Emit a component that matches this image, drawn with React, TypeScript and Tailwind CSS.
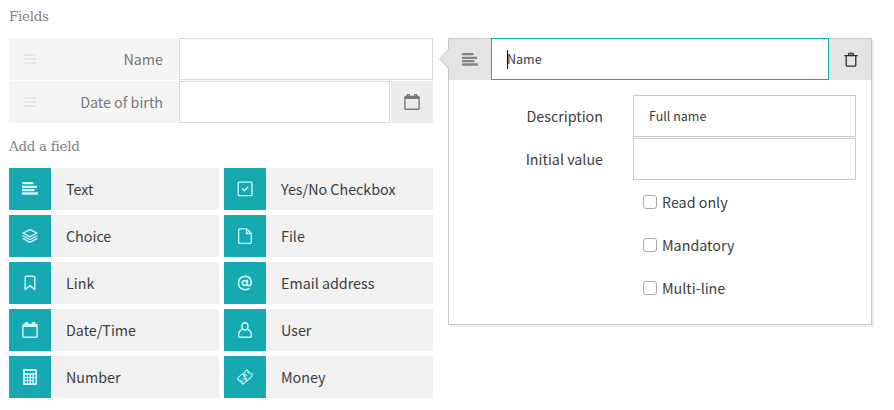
import React from "react";

const SANS = "font-['Noto_Sans_CJK_SC','Noto_Sans',sans-serif]";

type IconProps = { className?: string };

const TextIcon = ({ className }: IconProps) => (
  <svg className={className} width="16" height="16" viewBox="0 0 16 16" fill="currentColor">
    <path d="M0 1h11.5v2.300H0zM0 4.700h15v2.300H0zM0 8h12.5v2.300H0zM0 11.200h16v2.600H0z" />
  </svg>
);

const stroke = { fill: "none", stroke: "currentColor", strokeLinejoin: "round", strokeLinecap: "round" } as const;

const LayersIcon = () => (
  <svg width="16" height="16" viewBox="0 0 16 16" {...stroke} strokeWidth="1.3">
    <path d="M8 1.600l7 3.6-7 3.6-7-3.6z" />
    <path d="M1 8l7 3.6L15 8M1 10.700l7 3.6 7-3.6" />
  </svg>
);

const BookmarkIcon = () => (
  <svg width="16" height="16" viewBox="0 0 16 16" {...stroke} strokeWidth="1.4">
    <path d="M3.2 14.6V2.2q0-1 1-1h7.6q1 0 1 1v12.400L8 10.600z" />
  </svg>
);

const CalendarIcon = ({ className }: IconProps) => (
  <svg className={className} width="16" height="16" viewBox="0 0 16 16" {...stroke} strokeWidth="1.4">
    <rect x="0.9" y="2.4" width="14.2" height="12.9" rx="1" />
    <path d="M1 2.500h14v2.500H1z" fill="currentColor" stroke="none" />
    <rect x="3.3" y="0.500" width="2.200" height="3.8" rx="1.100" />
    <rect x="10.5" y="0.500" width="2.200" height="3.8" rx="1.100" />
  </svg>
);

const CalculatorIcon = () => (
  <svg width="16" height="16" viewBox="0 0 16 16" fill="currentColor">
    <path
      fillRule="evenodd"
      d="M2 0h12q1 0 1 1v14q0 1-1 1H2q-1 0-1-1V1q0-1 1-1zM3 2v2h10V2zM3 6v2h2V6zM6 6v2h1.500V6zM9 6v2h1.500V6zM12 6v2h1.500V6zM3 9v2h2V9zM6 9v2h1.500V9zM9 9v2h1.500V9zM12 9v5h1.500V9zM3 12v2h2v-2zM6 12v2h1.500v-2zM9 12v2h1.500v-2z"
    />
  </svg>
);

const CheckIcon = () => (
  <svg width="16" height="16" viewBox="0 0 16 16" {...stroke} strokeWidth="1.3">
    <rect x="1.200" y="1.200" width="13.800" height="13.500" rx="1" />
    <path d="M5.500 7.800l1.900 1.900 3.400-3.500" />
  </svg>
);

const FileIcon = () => (
  <svg width="16" height="16" viewBox="0 0 16 16" {...stroke} strokeWidth="1.3">
    <path d="M9.500 0.800H2.700q-1 0-1 1v12.500q0 1 1 1h10.600q1 0 1-1V5.500zM9.500 0.800v4.700h4.800" />
  </svg>
);

const AtIcon = () => (
  <svg width="16" height="16" viewBox="0 0 16 16" {...stroke} strokeWidth="1.600">
    <ellipse cx="7.700" cy="8" rx="2.300" ry="2.500" />
    <path d="M10.500 5.300l-.4 4q0 1.500 1.600 1.500 2.600-.3 2.600-3.400Q13.900 1.500 8.200 1.300 1.700 1.700 1.500 8q.2 6.500 6.500 6.600 2.500 0 4-.9" />
  </svg>
);

const UserIcon = () => (
  <svg width="16" height="16" viewBox="0 0 16 16" {...stroke} strokeWidth="1.400">
    <rect x="5" y="0.800" width="6" height="7.200" rx="3" />
    <path d="M5.600 7.200Q1.700 9 1.700 13v1.200q0 1 1 1h10.600q1 0 1-1V13q0-4-3.900-5.800" />
  </svg>
);

const MoneyIcon = () => (
  <svg width="16" height="16" viewBox="0 0 16 16" {...stroke} strokeWidth="1.050">
    <path d="M.6 10.200Q1 8 4.200 5.900 7.600 3.800 9.900 .7q1.400 2.300 5.500 4.700Q15 8 11.700 10.200 8.300 12.400 6 15.300 4.700 12.700 .6 10.200z" />
    <path d="M9.500 6.600Q8.200 4.900 6.900 5.900q-.8 1.100.7 1.900 2 .7 1.300 2-1.300 1-2.600-.5M6.500 4.900l3 6" />
    <path d="M10.600 3.300l1.500 1.300M3.800 11.300l1.500 1.300" />
  </svg>
);

const TrashIcon = () => (
  <svg width="14" height="15" viewBox="0 0 14 15" {...stroke} strokeWidth="1.300">
    <path d="M.8 3.700h12.400M2.200 3.700v9.300q0 1.200 1.200 1.200h7.200q1.200 0 1.200-1.200V3.700" />
    <path d="M4.500 3.200V1.900q0-.8.8-.8h3.400q.8 0 .8.800v1.300z" fill="#888" strokeWidth="1" />
  </svg>
);

const DragHandle = () => (
  <div className="flex w-3 flex-col gap-0.5">
    <div className="h-0.5 bg-[#e6e6e6]" />
    <div className="h-0.5 bg-[#e6e6e6]" />
    <div className="h-0.5 bg-[#e6e6e6]" />
  </div>
);

const FieldLabel = ({ children }: { children: React.ReactNode }) => (
  <div className="flex w-[170px] items-center justify-between bg-[#f5f5f5] pr-4 pl-[15px] text-[#777]">
    <DragHandle />
    <span>{children}</span>
  </div>
);

const fieldTypes = [
  { label: "Text", icon: <TextIcon /> },
  { label: "Yes/No Checkbox", icon: <CheckIcon /> },
  { label: "Choice", icon: <LayersIcon /> },
  { label: "File", icon: <FileIcon /> },
  { label: "Link", icon: <BookmarkIcon /> },
  { label: "Email address", icon: <AtIcon /> },
  { label: "Date/Time", icon: <CalendarIcon /> },
  { label: "User", icon: <UserIcon /> },
  { label: "Number", icon: <CalculatorIcon /> },
  { label: "Money", icon: <MoneyIcon /> },
];

const Heading = ({ children }: { children: React.ReactNode }) => (
  <h2 className="font-['DejaVu_Serif',serif] text-[13.4px] leading-5 tracking-[-0.25px] text-[#808080]">{children}</h2>
);

export default function App() {
  return (
    <div className={`flex h-[410px] w-[894px] items-start overflow-hidden bg-white pl-[9px] text-[14.3px] leading-5 text-[#3c3c3c] ${SANS}`}>
      <section className="w-[424px] pt-[7px]">
        <Heading>Fields</Heading>
        <div className="mt-[11px] flex flex-col gap-px">
          <div className="flex h-[42px]">
            <FieldLabel>Name</FieldLabel>
            <div className="flex-1 border border-[#d9d9d9]" />
          </div>
          <div className="flex h-[42px]">
            <FieldLabel>Date of birth</FieldLabel>
            <div className="mr-px flex-1 border border-[#d9d9d9]" />
            <div className="flex w-[42px] items-center justify-center bg-[#ececec] text-[#777]">
              <CalendarIcon />
            </div>
          </div>
        </div>
        <div className="mt-3.5">
          <Heading>Add a field</Heading>
        </div>
        <div className="mt-[11px] grid grid-cols-[210px_209px] gap-[5px]">
          {fieldTypes.map((f) => (
            <div key={f.label} className="flex h-[42px] items-center bg-[#f1f1f1]">
              <div className="flex h-full w-[42px] items-center justify-center bg-[#17a9b1] text-[#d0f6f7]">{f.icon}</div>
              <span className="pl-[15px]">{f.label}</span>
            </div>
          ))}
        </div>
      </section>

      <section className="relative mt-[38px] ml-[15px] h-[287px] w-[424px] border border-[#c9c9c9] bg-white shadow-[2px_2px_0_#eeeeee]">
        <svg className="absolute top-[10px] -left-[11px]" width="12" height="20" viewBox="0 0 12 20">
          <path d="M12 0L10.500 .5 1.500 10l9 9.500L12 20z" fill="#e4e4e4" />
          <path d="M10.500 .5L1.500 10l9 9.500" fill="none" stroke="#c9c9c9" />
        </svg>
        <div className="-mt-px flex h-[42px]">
          <div className="flex w-[42px] items-center justify-center border-t border-[#c9c9c9] bg-[#e4e4e4] text-[#858585]">
            <TextIcon />
          </div>
          <div className="flex w-[338px] items-center border border-[#17a9b1] bg-white pl-[15px] text-[12.5px]">
            <span className="h-[19px] w-px bg-black" />
            <span className="-ml-px">Name</span>
          </div>
          <div className="ml-px flex flex-1 items-center justify-center border-t border-[#c9c9c9] bg-[#e4e4e4] text-[#2d2d2d]">
            <TrashIcon />
          </div>
        </div>
        <div className="mt-[15px] flex flex-col gap-px">
          <div className="flex h-[42px] items-center">
            <span className="w-[184px] pr-[30px] text-right">Description</span>
            <div className="flex h-full w-[223px] items-center border border-[#c9c9c9] pl-[15px] text-[12.5px]">Full name</div>
          </div>
          <div className="flex h-[42px] items-center">
            <span className="w-[184px] pr-[30px] text-right">Initial value</span>
            <div className="h-full w-[223px] border border-[#c9c9c9]" />
          </div>
          {["Read only", "Mandatory", "Multi-line"].map((l) => (
            <label key={l} className="flex h-[42px] items-center gap-[5px] pl-[194px]">
              <span className="h-3.5 w-3.5 rounded-[3px] border border-[#aaa] bg-white" />
              <span>{l}</span>
            </label>
          ))}
        </div>
      </section>
    </div>
  );
}
